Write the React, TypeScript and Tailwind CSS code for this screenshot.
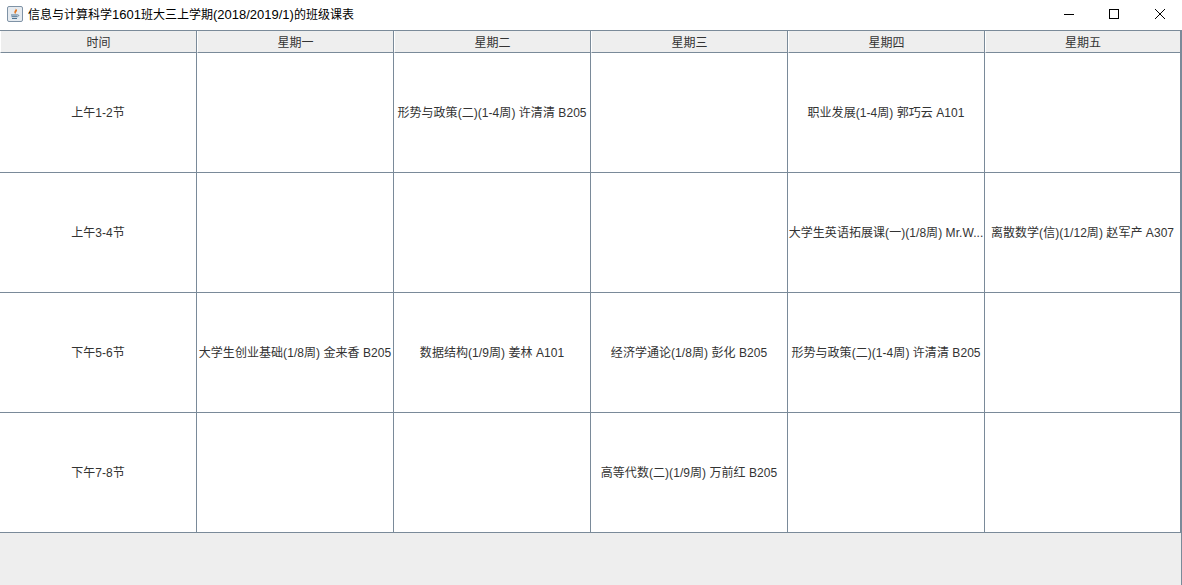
import React from 'react';

const headers = ['时间', '星期一', '星期二', '星期三', '星期四', '星期五'];

const rows = [
  ['上午1-2节', '', '形势与政策(二)(1-4周) 许清清 B205', '', '职业发展(1-4周) 郭巧云 A101', ''],
  ['上午3-4节', '', '', '', '大学生英语拓展课(一)(1/8周) Mr.W...', '离散数学(信)(1/12周) 赵军产 A307'],
  ['下午5-6节', '大学生创业基础(1/8周) 金来香 B205', '数据结构(1/9周) 姜林 A101', '经济学通论(1/8周) 彭化 B205', '形势与政策(二)(1-4周) 许清清 B205', ''],
  ['下午7-8节', '', '', '高等代数(二)(1/9周) 万前红 B205', '', ''],
];

const JavaIcon = () => (
  <svg width="16" height="16" viewBox="0 0 16 16" className="mb-[2px] shrink-0">
    <rect x="0.5" y="0.5" width="15" height="15" rx="1.5" fill="#e6ebf0" stroke="#7f93a6" />
    <path d="M8.5 2.5c1 1.5-2 2.5-1 4.5.3.6.7.9 1 1-.5-1.500 2-2.500 1.500-4-.2-.6-.8-1.100-1.500-1.500z" fill="#e2741d" />
    <path d="M4 9h6.500M4.500 10.700h6M5 12.500h5" stroke="#4f7391" strokeWidth="1" fill="none" />
    <path d="M10.500 8.800c1.500-.2 1.800 1.300.2 1.700" stroke="#4f7391" strokeWidth="0.8" fill="none" />
  </svg>
);

const WindowButtons = () => (
  <div className="flex h-full">
    <button className="flex h-full w-[46px] items-center justify-center pb-[2px] pl-[2px]">
      <svg width="10" height="10" viewBox="0 0 10 10">
        <path d="M0 5.500h10" stroke="#000" strokeWidth="1" />
      </svg>
    </button>
    <button className="flex h-full w-[46px] items-center justify-center pb-[2px]">
      <svg width="10" height="10" viewBox="0 0 10 10">
        <rect x="0.500" y="0.500" width="9" height="9" fill="none" stroke="#000" strokeWidth="1" />
      </svg>
    </button>
    <button className="flex h-full w-[45px] items-center justify-center pb-[2px] pl-px">
      <svg width="10" height="10" viewBox="0 0 10 10">
        <path d="M0 0l10 10M10 0L0 10" stroke="#000" strokeWidth="1" />
      </svg>
    </button>
  </div>
);

export default function App() {
  return (
    <div className="flex h-[585px] w-[1182px] flex-col overflow-hidden bg-[#eeeeee] font-['Liberation_Sans','Noto_Sans_CJK_SC',sans-serif] text-xs text-[#333333]">
      {/* Title bar */}
      <div className="flex h-[30px] shrink-0 items-center justify-between bg-white pl-[7px]">
        <div className="flex items-center gap-[5px] text-black">
          <JavaIcon />
          <span>
            信息与计算科学<span className="text-[13px]">1601</span>班大三上学期<span className="text-[13px]">(2018/2019/1)</span>的班级课表
          </span>
        </div>
        <WindowButtons />
      </div>

      {/* Timetable */}
      <div className="flex-1 border-r border-[#7a8a99] tracking-[0.05px]">
        <div className="grid grid-cols-[197px_197px_197px_197px_197px_196px] border-t border-[#7a8a99]">
          {headers.map((h) => (
            <div
              key={h}
              className="flex h-[22px] items-center justify-center border-r border-b border-l border-r-[#7a8a99] border-b-[#7a8a99] border-l-white bg-[#eeeeee] pt-[2px]"
            >
              {h}
            </div>
          ))}
        </div>
        <div className="grid grid-cols-[197px_197px_197px_197px_197px_196px] bg-white">
          {rows.map((row) =>
            row.map((cell, i) => (
              <div
                key={row[0] + i}
                className="flex h-[120px] items-center justify-center whitespace-nowrap border-r border-b border-[#7a8a99] pt-px"
              >
                {cell}
              </div>
            )),
          )}
        </div>
      </div>
    </div>
  );
}
